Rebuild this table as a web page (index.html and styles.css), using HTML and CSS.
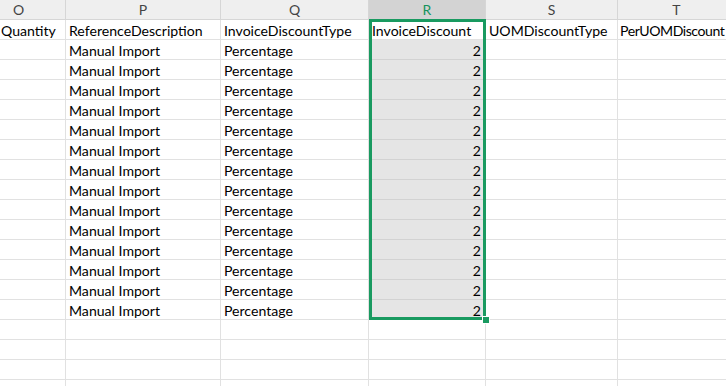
FILE: index.html
```html
<!DOCTYPE html>
<html>
<head>
<meta charset="utf-8">
<link rel="stylesheet" href="styles.css">
</head>
<body>
<div class="sheet">
  <div class="grid">
    <div class="hd hd-o">O</div><div class="hd">P</div><div class="hd">Q</div><div class="hd hd-sel">R</div><div class="hd">S</div><div class="hd">T</div>
    <div class="c c-o">Quantity</div><div class="c">ReferenceDescription</div><div class="c">InvoiceDiscountType</div><div class="c">InvoiceDiscount</div><div class="c">UOMDiscountType</div><div class="c c-t">PerUOMDiscount</div>
    <div class="c"></div><div class="c">Manual Import</div><div class="c">Percentage</div><div class="c sel num">2</div><div class="c"></div><div class="c"></div>
    <div class="c"></div><div class="c">Manual Import</div><div class="c">Percentage</div><div class="c sel num">2</div><div class="c"></div><div class="c"></div>
    <div class="c"></div><div class="c">Manual Import</div><div class="c">Percentage</div><div class="c sel num">2</div><div class="c"></div><div class="c"></div>
    <div class="c"></div><div class="c">Manual Import</div><div class="c">Percentage</div><div class="c sel num">2</div><div class="c"></div><div class="c"></div>
    <div class="c"></div><div class="c">Manual Import</div><div class="c">Percentage</div><div class="c sel num">2</div><div class="c"></div><div class="c"></div>
    <div class="c"></div><div class="c">Manual Import</div><div class="c">Percentage</div><div class="c sel num">2</div><div class="c"></div><div class="c"></div>
    <div class="c"></div><div class="c">Manual Import</div><div class="c">Percentage</div><div class="c sel num">2</div><div class="c"></div><div class="c"></div>
    <div class="c"></div><div class="c">Manual Import</div><div class="c">Percentage</div><div class="c sel num">2</div><div class="c"></div><div class="c"></div>
    <div class="c"></div><div class="c">Manual Import</div><div class="c">Percentage</div><div class="c sel num">2</div><div class="c"></div><div class="c"></div>
    <div class="c"></div><div class="c">Manual Import</div><div class="c">Percentage</div><div class="c sel num">2</div><div class="c"></div><div class="c"></div>
    <div class="c"></div><div class="c">Manual Import</div><div class="c">Percentage</div><div class="c sel num">2</div><div class="c"></div><div class="c"></div>
    <div class="c"></div><div class="c">Manual Import</div><div class="c">Percentage</div><div class="c sel num">2</div><div class="c"></div><div class="c"></div>
    <div class="c"></div><div class="c">Manual Import</div><div class="c">Percentage</div><div class="c sel num">2</div><div class="c"></div><div class="c"></div>
    <div class="c"></div><div class="c">Manual Import</div><div class="c">Percentage</div><div class="c sel num">2</div><div class="c"></div><div class="c"></div>
    <div class="c"></div><div class="c"></div><div class="c"></div><div class="c"></div><div class="c"></div><div class="c"></div>
    <div class="c"></div><div class="c"></div><div class="c"></div><div class="c"></div><div class="c"></div><div class="c"></div>
    <div class="c"></div><div class="c"></div><div class="c"></div><div class="c"></div><div class="c"></div><div class="c"></div>
    <div class="c"></div><div class="c"></div><div class="c"></div><div class="c"></div><div class="c"></div><div class="c"></div>
  </div>
  <div class="selbox"><div class="handle"></div></div>
</div>
</body>
</html>
```
FILE: styles.css
```css
html, body {
  margin: 0;
  padding: 0;
  background: #ffffff;
  overflow: hidden;
}
.sheet {
  position: relative;
  width: 726px;
  height: 386px;
  overflow: hidden;
  font-family: Lato, "Liberation Sans", sans-serif;
  font-size: 14.1px;
  color: #000;
}
.grid {
  display: grid;
  grid-template-columns: 66px 155px 148px 117px 132px 118px;
  width: 736px;
}
.hd {
  box-sizing: border-box;
  height: 20px;
  background: #efefef;
  border-right: 1px solid #d6d6d6;
  border-bottom: 1px solid #d6d6d6;
  color: #444;
  text-align: center;
  line-height: 19px;
  font-size: 14px;
}
.hd-o {
  text-align: left;
  padding-left: 13px;
}
.hd-sel {
  background: #d3d3d3;
  color: #16935c;
}
.c {
  box-sizing: border-box;
  height: 20px;
  border-right: 1px solid #e1e1e1;
  border-bottom: 1px solid #e1e1e1;
  line-height: 21px;
  padding-left: 3px;
  white-space: nowrap;
  overflow: hidden;
}
.c-o {
  padding-left: 1px;
}
.c-t {
  padding-left: 2px;
  letter-spacing: -0.45px;
}
.sel {
  background: #e5e5e5;
  border-bottom-color: #d2d2d2;
}
.num {
  text-align: right;
  padding-right: 4px;
}
.selbox {
  position: absolute;
  left: 369px;
  top: 19px;
  width: 117px;
  height: 301px;
  box-sizing: border-box;
  border: 3px solid #199a60;
}
.handle {
  position: absolute;
  right: -7px;
  bottom: -7px;
  width: 8px;
  height: 8px;
  box-sizing: border-box;
  background: #199a60;
  border: 1px solid #ffffff;
}
```
